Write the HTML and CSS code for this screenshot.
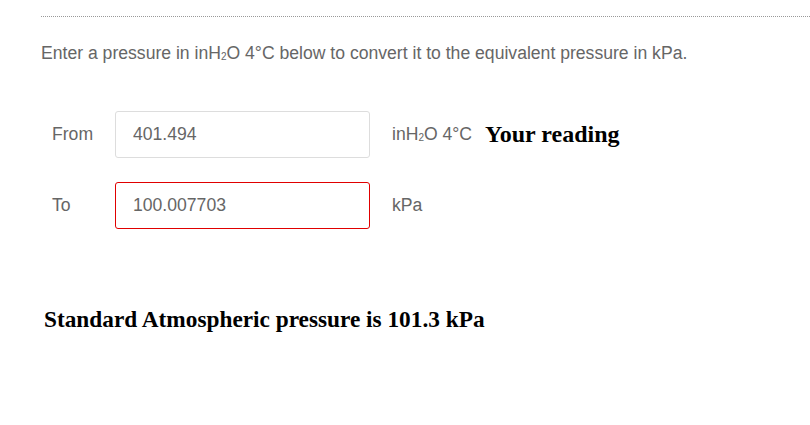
FILE: index.html
```html
<!DOCTYPE html>
<html lang="en">
<head>
    <meta charset="UTF-8">
    <title>inH2O 4°C to kPa</title>
    <link rel="stylesheet" href="styles.css">
</head>
<body>
    <div class="page">
        <hr class="divider">
        <p class="intro">Enter a pressure in inH<sub>2</sub>O 4°C below to convert it to the equivalent pressure in kPa.</p>

        <div class="converter">
            <div class="row">
                <label for="from">From</label>
                <input type="text" id="from" value="401.494">
                <span class="unit">inH<sub>2</sub>O 4°C</span>
                <span class="note">Your reading</span>
            </div>
            <div class="row">
                <label for="to">To</label>
                <input type="text" id="to" class="result" value="100.007703">
                <span class="unit">kPa</span>
            </div>
        </div>

        <h3 class="standard">Standard Atmospheric pressure is 101.3 kPa</h3>
    </div>
</body>
</html>
```

FILE: styles.css
```css
body {
    margin: 0;
    font-family: "Liberation Sans", Arial, sans-serif;
    background-color: #fff;
    color: #666;
}

.page {
    padding: 16px 0 0 41px;
}

.divider {
    margin: 0;
    border: 0;
    border-top: 1px dotted #999;
}

.intro {
    margin: 25px 0 0;
    font-size: 17.6px;
    line-height: 22px;
}

sub {
    font-size: 10px;
    vertical-align: -1px;
    line-height: 0;
}

.converter {
    margin-top: 47px;
    padding-left: 11px;
}

.row {
    display: flex;
    align-items: center;
    margin-bottom: 24px;
}

label {
    width: 63px;
    font-size: 17.6px;
}

input {
    width: 255px;
    height: 47px;
    box-sizing: border-box;
    padding: 0 17px;
    font-family: "Liberation Sans", Arial, sans-serif;
    font-size: 17.6px;
    color: #666;
    border: 1px solid #ddd;
    border-radius: 3px;
    outline: none;
}

input.result {
    border: 1px solid #e00000;
}

.unit {
    margin-left: 22px;
    font-size: 17.6px;
}

.note {
    margin-left: 13px;
    font-family: "Liberation Serif", serif;
    font-weight: bold;
    font-size: 24px;
    color: #000;
}

.standard {
    margin: 77px 0 0 3px;
    font-family: "Liberation Serif", serif;
    font-weight: bold;
    font-size: 23.3px;
    color: #000;
}
```
